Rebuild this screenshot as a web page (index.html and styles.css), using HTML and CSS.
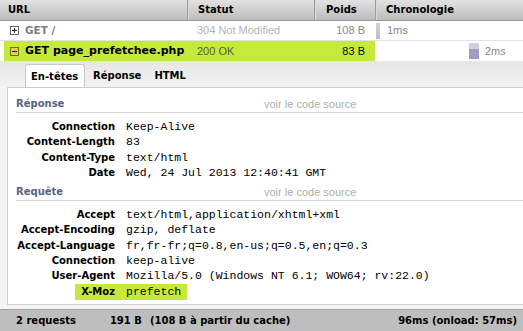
FILE: index.html
```html
<!DOCTYPE html>
<html>
<head>
  <meta charset="UTF-8">
  <title>Réseau</title>
  <link rel="stylesheet" href="styles.css">
</head>
<body>
<div class="net">

  <div class="head">
    <div class="col c-url">URL</div>
    <div class="col c-status">Statut</div>
    <div class="col c-size">Poids</div>
    <div class="col c-time">Chronologie</div>
  </div>

  <div class="row cached">
    <div class="col c-url"><span class="twisty plus"></span>GET /</div>
    <div class="col c-status">304 Not Modified</div>
    <div class="col c-size">108 B</div>
    <div class="col c-time"><span class="bar bar-cache"></span>1ms</div>
  </div>

  <div class="row opened">
    <div class="col c-url"><span class="twisty minus"></span>GET page_prefetchee.php</div>
    <div class="col c-status">200 OK</div>
    <div class="col c-size">83 B</div>
    <div class="col c-time"><span class="bar bar-load"></span>2ms</div>
  </div>

  <div class="tabs">
    <span class="tab selected">En-têtes</span>
    <span class="tab">Réponse</span>
    <span class="tab">HTML</span>
  </div>

  <div class="panel">
    <div class="sec">
      <span class="sec-title">Réponse</span>
      <a class="src" href="#">voir le code source</a>
    </div>
    <div class="hdrs">
      <div class="hdr"><span class="hk">Connection</span><span class="hv">Keep-Alive</span></div>
      <div class="hdr"><span class="hk">Content-Length</span><span class="hv">83</span></div>
      <div class="hdr"><span class="hk">Content-Type</span><span class="hv">text/html</span></div>
      <div class="hdr"><span class="hk">Date</span><span class="hv">Wed, 24 Jul 2013 12:40:41 GMT</span></div>
    </div>

    <div class="sec">
      <span class="sec-title">Requête</span>
      <a class="src" href="#">voir le code source</a>
    </div>
    <div class="hdrs">
      <div class="hdr"><span class="hk">Accept</span><span class="hv">text/html,application/xhtml+xml</span></div>
      <div class="hdr"><span class="hk">Accept-Encoding</span><span class="hv">gzip, deflate</span></div>
      <div class="hdr"><span class="hk">Accept-Language</span><span class="hv">fr,fr-fr;q=0.8,en-us;q=0.5,en;q=0.3</span></div>
      <div class="hdr"><span class="hk">Connection</span><span class="hv">keep-alive</span></div>
      <div class="hdr"><span class="hk">User-Agent</span><span class="hv">Mozilla/5.0 (Windows NT 6.1; WOW64; rv:22.0)</span></div>
      <div class="hdr mark"><span class="hk"><b>X-Moz</b></span><span class="hv"><b>prefetch</b></span></div>
    </div>
  </div>

  <div class="foot">
    <span class="f-count">2 requests</span>
    <span class="f-size">191 B</span>
    <span class="f-cache">(108 B à partir du cache)</span>
    <span class="f-time">96ms (onload: 57ms)</span>
  </div>

</div>
</body>
</html>
```

FILE: styles.css
```css
body {
  margin: 0;
  font-family: "Liberation Sans", Arial, sans-serif;
  font-size: 11px;
  background-color: #f4f4f4;
}

/* bold text in the panel uses a wider face, like Tahoma bold */
.head,
.cached .c-url,
.opened .c-url,
.tabs,
.sec-title,
.hk,
.foot {
  font-family: "DejaVu Sans", Verdana, sans-serif;
  font-weight: bold;
  font-size: 10px;
}

.net {
  width: 523px;
  height: 331px;
  overflow: hidden;
  display: flex;
  flex-direction: column;
}

.head,
.row {
  display: grid;
  grid-template-columns: 187px 127px 61px 1fr;
}

.head {
  height: 20px;
  line-height: 20px;
  background: linear-gradient(#e2e2e2, #bcbcbc);
  border-bottom: 1px solid #9a9a9a;
  color: #000;
}
.head .col {
  border-left: 1px solid #9c9c9c;
  box-shadow: inset 1px 0 0 #dadada;
  padding-left: 10px;
}
.head .c-url {
  border-left: none;
  box-shadow: none;
  padding-left: 8px;
}
.head .c-size {
  padding-left: 11px;
}

.row {
  height: 19px;
  line-height: 19px;
  background-color: #fff;
  border-bottom: 1px solid #e4e4e4;
}
.row .col {
  white-space: nowrap;
  overflow: hidden;
}
.row .c-url {
  display: flex;
  align-items: center;
  padding-left: 10px;
}
.row .c-status {
  padding-left: 10px;
}
.row .c-size {
  text-align: right;
  padding-right: 10px;
}
.row .c-time {
  display: flex;
  align-items: center;
  padding-left: 1px;
  color: #888;
}

.cached .c-url { color: #7c7c7c; font-size: 10.5px; }
.cached .c-status { color: #b4b4b4; }
.cached .c-size { color: #888; }

.opened {
  border-bottom: none;
  height: 20px;
  line-height: 20px;
}
.opened .c-url {
  margin-left: 4px;
  padding-left: 6px;
  font-size: 11px;
  color: #000;
}
.opened .c-url,
.opened .c-status,
.opened .c-size {
  background-color: #c5ea3b;
}
.opened .c-status { color: #5c5c3c; }
.opened .c-size { color: #000; }

.twisty {
  width: 7px;
  height: 7px;
  border: 1px solid #666;
  background-color: #fff;
  margin-right: 6px;
  position: relative;
}
.twisty:before {
  content: "";
  position: absolute;
  left: 1px;
  top: 3px;
  width: 5px;
  height: 1px;
  background-color: #222;
}
.plus:after {
  content: "";
  position: absolute;
  left: 3px;
  top: 1px;
  width: 1px;
  height: 5px;
  background-color: #222;
}
.minus {
  background-color: #e3cf4a;
  border-color: #7a6a20;
}

.bar {
  display: inline-block;
  height: 16px;
  margin-right: 7px;
}
.bar-cache {
  width: 4px;
  background: linear-gradient(#d8d0d0, #c4bcbc);
}
.bar-load {
  width: 10px;
  margin-left: 93px;
  margin-right: 6px;
  background: linear-gradient(#d2cce0 0, #d2cce0 35%, #a39bc4 40%, #a39bc4 100%);
}

.tabs {
  height: 26px;
  padding-top: 3px;
  box-sizing: border-box;
  padding-left: 25px;
  background: linear-gradient(#e6e6e6, #f2f2f2);
  display: flex;
  align-items: flex-end;
  color: #000;
}
.tab {
  height: 23px;
  line-height: 23px;
  padding: 0 6px;
  margin-right: 1px;
  box-sizing: border-box;
}
.tab.selected {
  width: 60px;
  background-color: #fff;
  border: 1px solid #c8c8c8;
  border-bottom: none;
  border-radius: 3px 3px 0 0;
  margin-bottom: -1px;
  height: 24px;
  padding: 0 5px;
  margin-right: 2px;
}

.panel {
  margin-left: 7px;
  background-color: #fff;
  border-top: 1px solid #cfcfcf;
  border-left: 1px solid #cfcfcf;
  border-bottom: 1px solid #cfcfcf;
  padding: 8px 0 6px 8px;
  height: 218px;
  box-sizing: border-box;
}

.sec {
  display: flex;
  height: 16px;
  line-height: 16px;
  border-bottom: 1px solid #d4d4d4;
}
.sec + .hdrs {
  margin-top: 6px;
}
.hdrs + .sec {
  margin-top: 4px;
}
.sec-title {
  width: 248px;
  color: #566480;
}
.src {
  color: #b0b0b0;
  text-decoration: none;
}

.hdr {
  display: flex;
  height: 15.3px;
  line-height: 15.3px;
  white-space: nowrap;
}
.hk {
  width: 99px;
  padding-right: 11px;
  text-align: right;
  color: #000;
}
.hv {
  font-family: "Liberation Mono", "Courier New", monospace;
  font-size: 11.5px;
  color: #000;
}
.mark b {
  display: inline-block;
  background-color: #c5ea3b;
  line-height: 16.5px;
  margin-top: -0.6px;
}
.mark .hk b {
  padding: 0 11px 0 6px;
  margin-right: -11px;
}
.mark .hv b {
  font-weight: normal;
  padding-right: 6px;
}

.foot {
  margin-top: 4px;
  flex: 1;
  background-color: #bebebe;
  border-top: 1px solid #a2a2a2;
  display: flex;
  align-items: center;
  padding: 0 6px 0 16px;
  color: #000;
}
.f-size { margin-left: 34px; }
.f-cache { margin-left: 8px; }
.f-time { margin-left: auto; }
```
